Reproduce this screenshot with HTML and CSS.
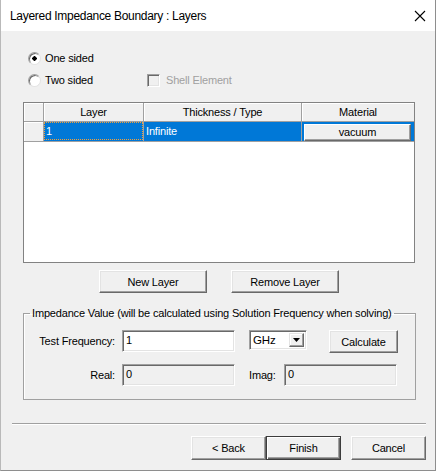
FILE: index.html
```html
<!DOCTYPE html>
<html>
<head>
<meta charset="utf-8">
<title>Layered Impedance Boundary : Layers</title>
<link rel="stylesheet" href="styles.css">
</head>
<body>
<div class="window">
  <div class="titlebar">
    <span class="title">Layered Impedance Boundary : Layers</span>
    <svg class="close" width="12" height="12" viewBox="0 0 12 12"><path d="M1 1 L11 11 M11 1 L1 11" stroke="#000" stroke-width="1.1" fill="none"/></svg>
  </div>
  <div class="content">
    <div class="opt-row first">
      <label class="radio"><span class="radio-mark checked"></span>One sided</label>
    </div>
    <div class="opt-row second">
      <label class="radio"><span class="radio-mark"></span>Two sided</label>
      <label class="check disabled"><span class="check-box"></span>Shell Element</label>
    </div>

    <div class="grid">
      <div class="grid-row head">
        <div class="cell rh"></div>
        <div class="cell c1">Layer</div>
        <div class="cell c2">Thickness / Type</div>
        <div class="cell c3">Material</div>
      </div>
      <div class="grid-row sel">
        <div class="cell rh"></div>
        <div class="cell c1"><span class="focus">1</span></div>
        <div class="cell c2">Infinite</div>
        <div class="cell c3"><span class="cell-btn">vacuum</span></div>
      </div>
    </div>

    <div class="layer-btns">
      <button class="btn">New Layer</button>
      <button class="btn">Remove Layer</button>
    </div>

    <fieldset class="group">
      <legend>Impedance Value (will be calculated using Solution Frequency when solving)</legend>
      <div class="form-row top-row">
        <span class="lbl">Test Frequency:</span>
        <span class="field">1</span>
        <span class="combo"><span class="combo-text">GHz</span><span class="combo-btn"><svg width="7" height="4" viewBox="0 0 7 4"><path d="M0 0 H7 L3.5 4 Z" fill="#000"/></svg></span></span>
        <button class="btn calc">Calculate</button>
      </div>
      <div class="form-row bottom-row">
        <span class="lbl">Real:</span>
        <span class="field disabled">0</span>
        <span class="lbl2">Imag:</span>
        <span class="field disabled">0</span>
      </div>
    </fieldset>

    <div class="separator"></div>

    <div class="footer">
      <button class="btn wiz back">&lt; Back</button>
      <button class="btn wiz default">Finish</button>
      <button class="btn wiz cancel">Cancel</button>
    </div>
  </div>
</div>
</body>
</html>
```

FILE: styles.css
```css
html, body {
  margin: 0;
  padding: 0;
  background: #ffffff;
}

body {
  font-family: "Liberation Sans", Arial, sans-serif;
  font-size: 11px;
  letter-spacing: -0.17px;
  color: #000;
}

.window {
  width: 436px;
  height: 471px;
  box-sizing: border-box;
  border-left: 1px solid #b9b9b9;
  border-right: 1px solid #8e8e8e;
  border-bottom: 1px solid #8e8e8e;
  background: #f0f0f0;
  display: flex;
  flex-direction: column;
}

.titlebar {
  height: 31px;
  background: #ffffff;
  display: flex;
  align-items: center;
  justify-content: space-between;
  padding: 0 9px 0 9px;
  flex: none;
}

.title {
  font-size: 12px;
  letter-spacing: -0.3px;
  color: #000;
  padding-top: 1px;
}

.close {
  display: block;
}

.content {
  display: flex;
  flex-direction: column;
  align-items: flex-start;
}

/* radio / checkbox rows */
.opt-row {
  height: 16px;
  display: flex;
  align-items: center;
  margin-left: 27px;
}
.opt-row.first { margin-top: 19px; }
.opt-row.second { margin-top: 6px; }

.radio {
  display: flex;
  align-items: center;
  width: 119px;
}

.radio-mark {
  width: 13px;
  height: 13px;
  box-sizing: border-box;
  border-radius: 50%;
  background: #fff;
  border: 1px solid;
  border-color: #a0a0a0 #e3e3e3 #e3e3e3 #a0a0a0;
  box-shadow: inset 1px 1px 0 #696969;
  margin-right: 4px;
  flex: none;
}
.radio-mark.checked {
  background: radial-gradient(circle at 50% 50%, #000 0, #000 2px, #fff 2.4px);
}

.check {
  display: flex;
  align-items: center;
}
.check-box {
  width: 13px;
  height: 13px;
  box-sizing: border-box;
  border: 1px solid;
  border-color: #a0a0a0 #fff #fff #a0a0a0;
  box-shadow: inset 1px 1px 0 #696969, inset -1px -1px 0 #e3e3e3;
  background: #f0f0f0;
  margin-right: 6px;
  flex: none;
}
.check.disabled {
  color: #a0a0a0;
}

/* grid */
.grid {
  margin: 14px 0 0 22px;
  width: 392px;
  height: 161px;
  box-sizing: border-box;
  border: 1px solid #828282;
  background: #ffffff;
}

.grid-row {
  display: flex;
}

.cell {
  box-sizing: border-box;
  border-right: 1px solid #a0a0a0;
  border-bottom: 1px solid #a0a0a0;
  white-space: nowrap;
  overflow: hidden;
}
.cell.rh { width: 20px; background: #f0f0f0; box-shadow: inset 1px 1px 0 #ffffff; }
.cell.c1 { width: 100px; }
.cell.c2 { width: 158px; }
.cell.c3 { width: 112px; border-right: none; }

.head .cell {
  height: 19px;
  line-height: 18px;
  text-align: center;
  background: #f0f0f0;
  box-shadow: inset 1px 1px 0 #ffffff;
}

.sel .cell {
  height: 20px;
  line-height: 19px;
}
.sel .c1, .sel .c2, .sel .c3 {
  background: #0078d7;
  color: #fff;
}
.sel .c2 {
  padding-left: 2px;
}

.focus {
  display: block;
  height: 18px;
  box-sizing: border-box;
  border: 1px dotted #000;
  outline: 1px dotted #f2a13a;
  outline-offset: -1px;
  padding-left: 1px;
  line-height: 16px;
}

.sel .c3 {
  padding: 2px 3px 1px 2px;
}
.cell-btn {
  display: block;
  height: 17px;
  box-sizing: border-box;
  background: #f0f0f0;
  color: #000;
  text-align: center;
  line-height: 15px;
  border: 1px solid;
  border-color: #ffffff #696969 #696969 #ffffff;
  box-shadow: inset -1px -1px 0 #a0a0a0;
}

/* buttons */
.btn {
  font-family: "Liberation Sans", Arial, sans-serif;
  font-size: 11px;
  letter-spacing: -0.17px;
  color: #000;
  background: #f0f0f0;
  box-sizing: border-box;
  border: 1px solid;
  border-color: #ffffff #696969 #696969 #ffffff;
  box-shadow: inset -1px -1px 0 #a0a0a0, inset 1px 1px 0 #e3e3e3;
  padding: 0;
  margin: 0;
  height: 23px;
}

.layer-btns {
  display: flex;
  gap: 24px;
  margin: 7px 0 0 98px;
}
.layer-btns .btn {
  width: 108px;
}

/* group */
.group {
  margin: 13px 0 0 22px;
  width: 393px;
  box-sizing: border-box;
  border: 1px solid #a0a0a0;
  box-shadow: inset 1px 1px 0 #ffffff;
  padding: 10px 0 13px 0;
  min-width: 0;
}
.group legend {
  padding: 0 2px;
  margin-left: 6px;
  line-height: 14px;
}

.form-row {
  display: flex;
  align-items: flex-start;
}
.form-row.bottom-row {
  margin-top: 11px;
}

.lbl {
  width: 91px;
  text-align: right;
  margin-right: 7px;
  line-height: 22px;
  flex: none;
}
.lbl2 {
  width: 35px;
  margin-left: 14px;
  line-height: 22px;
  flex: none;
}

.field {
  width: 113px;
  height: 22px;
  box-sizing: border-box;
  background: #ffffff;
  border: 1px solid;
  border-color: #a0a0a0 #ffffff #ffffff #a0a0a0;
  box-shadow: inset 1px 1px 0 #696969, inset -1px -1px 0 #e3e3e3;
  padding: 2px 0 0 3px;
  line-height: 14px;
  flex: none;
}
.field.disabled {
  background: #f0f0f0;
}

.combo {
  margin-left: 14px;
  width: 58px;
  height: 20px;
  box-sizing: border-box;
  background: #fff;
  border: 1px solid;
  border-color: #a0a0a0 #ffffff #ffffff #a0a0a0;
  box-shadow: inset 1px 1px 0 #696969, inset -1px -1px 0 #e3e3e3;
  display: flex;
  align-items: stretch;
  padding: 2px;
  flex: none;
}
.combo-text {
  flex: 1;
  line-height: 14px;
  padding-left: 1px;
  font-size: 11.5px;
}
.combo-btn {
  width: 15px;
  box-sizing: border-box;
  background: #f0f0f0;
  border: 1px solid;
  border-color: #e3e3e3 #696969 #696969 #e3e3e3;
  box-shadow: inset -1px -1px 0 #a0a0a0, inset 1px 1px 0 #ffffff;
  display: flex;
  align-items: center;
  justify-content: center;
}
.combo-btn svg { display: block; }

.btn.calc {
  margin-left: 22px;
  width: 69px;
  height: 23px;
}

/* separator */
.separator {
  margin: 23px 0 0 11px;
  width: 414px;
  height: 0;
  border-top: 1px solid #a0a0a0;
  border-bottom: 1px solid #ffffff;
}

/* footer */
.footer {
  display: flex;
  margin: 11px 0 0 190px;
}
.btn.wiz {
  width: 75px;
  height: 24px;
}
.btn.wiz.default {
  border: 1px solid #3c3c3c;
  box-shadow: inset 1px 1px 0 #ffffff, inset -1px -1px 0 #696969, inset -2px -2px 0 #a0a0a0;
}
.btn.wiz.cancel {
  margin-left: 10px;
}
```
